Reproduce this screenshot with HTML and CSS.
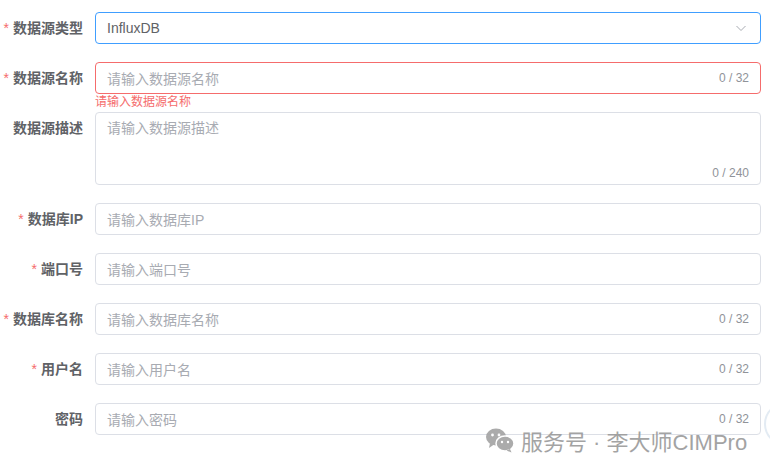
FILE: index.html
```html
<!DOCTYPE html>
<html lang="zh-CN">
<head>
    <meta charset="UTF-8">
    <meta name="viewport" content="width=device-width, initial-scale=1.0">
    <title>数据源配置</title>
    <link rel="stylesheet" href="styles.css">
</head>
<body>

<form class="ds-form">
    <div class="form-item">
        <label class="form-label required">数据源类型</label>
        <div class="form-content">
            <div class="input select is-focus">
                <span class="input-value">InfluxDB</span>
                <svg class="arrow" width="12" height="12" viewBox="0 0 12 12"><path d="M1.5 4 L6 8.5 L10.5 4" fill="none" stroke="#a8abb2" stroke-width="1"/></svg>
            </div>
        </div>
    </div>

    <div class="form-item">
        <label class="form-label required">数据源名称</label>
        <div class="form-content">
            <div class="input is-error">
                <span class="placeholder">请输入数据源名称</span>
                <span class="count">0 / 32</span>
            </div>
            <div class="form-error">请输入数据源名称</div>
        </div>
    </div>

    <div class="form-item">
        <label class="form-label">数据源描述</label>
        <div class="form-content">
            <div class="textarea">
                <span class="placeholder">请输入数据源描述</span>
                <span class="count">0 / 240</span>
            </div>
        </div>
    </div>

    <div class="form-item">
        <label class="form-label required">数据库IP</label>
        <div class="form-content">
            <div class="input"><span class="placeholder">请输入数据库IP</span></div>
        </div>
    </div>

    <div class="form-item">
        <label class="form-label required">端口号</label>
        <div class="form-content">
            <div class="input"><span class="placeholder">请输入端口号</span></div>
        </div>
    </div>

    <div class="form-item">
        <label class="form-label required">数据库名称</label>
        <div class="form-content">
            <div class="input">
                <span class="placeholder">请输入数据库名称</span>
                <span class="count">0 / 32</span>
            </div>
        </div>
    </div>

    <div class="form-item">
        <label class="form-label required">用户名</label>
        <div class="form-content">
            <div class="input">
                <span class="placeholder">请输入用户名</span>
                <span class="count">0 / 32</span>
            </div>
        </div>
    </div>

    <div class="form-item">
        <label class="form-label">密码</label>
        <div class="form-content">
            <div class="input">
                <span class="placeholder">请输入密码</span>
                <span class="count">0 / 32</span>
            </div>
        </div>
    </div>
</form>

<!-- watermark over the last row -->
<div class="watermark">
    <svg width="30" height="26" viewBox="0 0 30 26">
        <ellipse cx="11" cy="10" rx="10" ry="8.5" fill="#a3a3a3"/>
        <path d="M5 16 L4 21 L9 17.5 Z" fill="#a3a3a3"/>
        <ellipse cx="20" cy="16.5" rx="9" ry="7.5" fill="#a3a3a3" stroke="#fff" stroke-width="1.5"/>
        <path d="M25 22 L26.5 25.5 L21.5 23.5 Z" fill="#a3a3a3"/>
        <circle cx="7.5" cy="8" r="1.4" fill="#fff"/>
        <circle cx="14" cy="8" r="1.4" fill="#fff"/>
        <circle cx="17" cy="15" r="1.2" fill="#fff"/>
        <circle cx="23" cy="15" r="1.2" fill="#fff"/>
    </svg>
    <span>服务号 · 李大师CIMPro</span>
</div>
<div class="edge-blob"></div>

</body>
</html>
```

FILE: styles.css
```css
body {
    margin: 0;
    background: #fff;
    font-family: "Liberation Sans", "Noto Sans CJK SC", sans-serif;
    font-size: 14px;
    color: #606266;
    overflow: hidden;
}

.ds-form {
    padding: 12px 9px 0 0;
}

.form-item {
    display: flex;
    margin-bottom: 18px;
}

.form-label {
    width: 95px;
    flex-shrink: 0;
    box-sizing: border-box;
    padding-right: 12px;
    text-align: right;
    line-height: 32px;
    font-weight: bold;
    color: #606266;
}
.form-label.required::before {
    content: "*";
    color: #f56c6c;
    margin-right: 4px;
    font-weight: normal;
}

.form-content {
    flex: 1;
    position: relative;
}

.input {
    height: 32px;
    box-sizing: border-box;
    border: 1px solid #dcdfe6;
    border-radius: 4px;
    padding: 0 11px;
    display: flex;
    align-items: center;
    justify-content: space-between;
}
.input.is-focus { border-color: #409eff; }
.input.is-error { border-color: #f56c6c; }

.input-value { color: #606266; }
.placeholder { color: #a8abb2; }

.count {
    font-size: 12px;
    color: #909399;
}

.arrow { margin-right: 2px; }

.form-error {
    position: absolute;
    top: 100%;
    left: 0;
    padding-top: 2px;
    font-size: 12px;
    line-height: 1;
    color: #f56c6c;
}

.textarea {
    position: relative;
    height: 73px;
    box-sizing: border-box;
    border: 1px solid #dcdfe6;
    border-radius: 4px;
    padding: 5px 11px;
    line-height: 20px;
}
.textarea .count {
    position: absolute;
    right: 11px;
    bottom: 3px;
    line-height: 16px;
}

.watermark {
    position: absolute;
    left: 485px;
    top: 424px;
    display: flex;
    align-items: center;
    gap: 6px;
    font-size: 22px;
    color: #9a9a9a;
    opacity: 0.9;
}

.edge-blob {
    position: absolute;
    left: 764px;
    top: 402px;
    width: 40px;
    height: 40px;
    border-radius: 50%;
    border: 2px solid #e3ebf3;
}
```
